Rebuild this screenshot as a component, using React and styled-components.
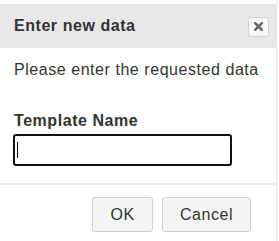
import React from 'react';
import styled, { createGlobalStyle } from 'styled-components';

const GlobalStyle = createGlobalStyle`
  body {
    margin: 0;
    background: #fff;
    font-family: 'Liberation Sans', Arial, sans-serif;
  }
`;

const Dialog = styled.div`
  width: 277px;
  height: 241px;
  padding-top: 4px;
  box-sizing: border-box;
  border-right: 1px solid #e6e6e6;
  background: #fff;
  color: #333;
`;

const TitleBar = styled.div`
  height: 44px;
  background: #e8e8e8;
  border-radius: 0 3px 3px 0;
  display: flex;
  align-items: center;
  justify-content: space-between;
  padding: 0 7px 0 14px;
`;

const Title = styled.span`
  font-size: 16px;
  letter-spacing: 0.55px;
  font-weight: bold;
  color: #333;
  margin-top: -1px;
`;

const CloseButton = styled.button`
  width: 21px;
  height: 20px;
  padding: 0;
  margin-top: 1px;
  border: 1px solid #d3d3d3;
  border-radius: 3px;
  background: #f6f6f6;
  display: flex;
  align-items: center;
  justify-content: center;
`;

const Content = styled.div`
  padding: 13px 14px 0 13px;
`;

const Message = styled.p`
  margin: 0 0 0 1px;
  font-size: 16px;
  letter-spacing: 0.55px;
  line-height: 18px;
`;

const Label = styled.label`
  display: block;
  margin: 33px 0 4px 1px;
  font-size: 16px;
  letter-spacing: 0.55px;
  line-height: 18px;
  font-weight: bold;
`;

const Input = styled.input`
  width: 219px;
  height: 32px;
  box-sizing: border-box;
  border: 2px solid #111;
  border-radius: 3px;
  padding: 0 4px;
  outline: none;
  font-size: 16px;
  font-family: inherit;
`;

const Caret = styled.span`
  position: absolute;
  left: 4px;
  top: 8px;
  width: 1px;
  height: 16px;
  background: #000;
`;

const InputWrap = styled.div`
  position: relative;
  width: 219px;
`;

const Divider = styled.div`
  margin-top: 17px;
  height: 2px;
  background: #ececec;
`;

const ButtonRow = styled.div`
  display: flex;
  justify-content: flex-end;
  gap: 9px;
  padding: 12px 25px 0 0;
`;

const Button = styled.button`
  width: ${p => p.w}px;
  height: 35px;
  border: 1px solid #d0d0d0;
  border-radius: 3px;
  background: #f5f5f5;
  color: #333;
  font-size: 16px;
  letter-spacing: 0.55px;
  font-family: inherit;
  padding: 0;
`;

export default function App() {
  return (
    <>
      <GlobalStyle />
      <Dialog>
        <TitleBar>
          <Title>Enter new data</Title>
          <CloseButton aria-label="close">
            <svg width="9" height="9" viewBox="0 0 9 9">
              <path d="M1.2 1.2 L7.8 7.8 M7.8 1.2 L1.2 7.8" stroke="#666" strokeWidth="2.5" strokeLinecap="square" />
            </svg>
          </CloseButton>
        </TitleBar>
        <Content>
          <Message>Please enter the requested data</Message>
          <Label>Template Name</Label>
          <InputWrap>
            <Input />
            <Caret />
          </InputWrap>
        </Content>
        <Divider />
        <ButtonRow>
          <Button w={61}>OK</Button>
          <Button w={89}>Cancel</Button>
        </ButtonRow>
      </Dialog>
    </>
  );
}
